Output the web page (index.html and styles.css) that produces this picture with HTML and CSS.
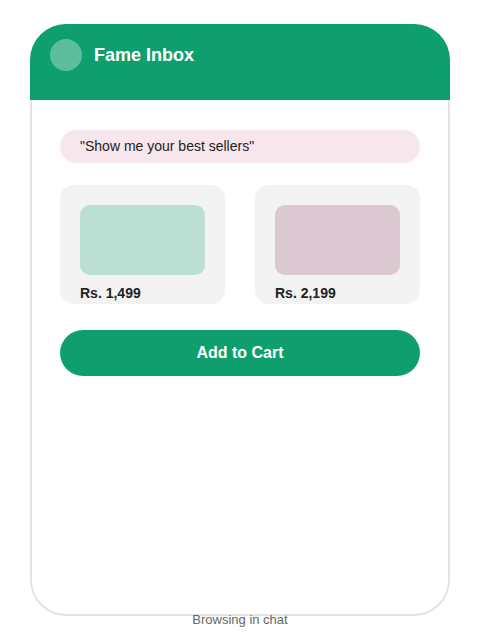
FILE: index.html
```html
<!DOCTYPE html>
<html lang="en">
<head>
    <meta charset="UTF-8">
    <meta name="viewport" content="width=device-width, initial-scale=1.0">
    <title>Fame Inbox</title>
    <link rel="stylesheet" href="styles.css">
</head>
<body>
    <div class="phone">
        <div class="chat-header">
            <div class="avatar"></div>
            <h1>Fame Inbox</h1>
        </div>
        <div class="chat-body">
            <div class="bubble">"Show me your best sellers"</div>
            <div class="products">
                <div class="product">
                    <div class="thumb thumb-green"></div>
                    <div class="price">Rs. 1,499</div>
                </div>
                <div class="product">
                    <div class="thumb thumb-rose"></div>
                    <div class="price">Rs. 2,199</div>
                </div>
            </div>
            <button class="cart-button">Add to Cart</button>
        </div>
    </div>
    <p class="caption">Browsing in chat</p>
</body>
</html>
```

FILE: styles.css
```css
body {
    margin: 0;
    padding-top: 24px;
    font-family: 'Liberation Sans', Arial, sans-serif;
    background-color: #ffffff;
    color: #222222;
}
.phone {
    width: 420px;
    height: 592px;
    margin: 0 auto;
    border-radius: 36px;
    box-shadow: inset 0 0 0 2px #e3e3e3;
    overflow: hidden;
    box-sizing: border-box;
}
.chat-header {
    background-color: #0f9f6e;
    display: flex;
    align-items: center;
    gap: 12px;
    padding: 15px 20px 29px;
}
.avatar {
    width: 32px;
    height: 32px;
    border-radius: 50%;
    background-color: rgba(255, 255, 255, 0.32);
}
.chat-header h1 {
    margin: 0;
    color: #ffffff;
    font-size: 18px;
    font-weight: bold;
}
.chat-body {
    padding: 30px 30px 0;
}
.bubble {
    background-color: #f7e6eb;
    border-radius: 17px;
    height: 33px;
    line-height: 33px;
    padding: 0 20px;
    font-size: 14px;
    color: #222222;
}
.products {
    display: grid;
    grid-template-columns: 1fr 1fr;
    gap: 30px;
    margin-top: 22px;
}
.product {
    background-color: #f3f3f3;
    border-radius: 14px;
    padding: 20px 20px 1px;
}
.thumb {
    height: 70px;
    border-radius: 10px;
    margin-bottom: 8px;
}
.thumb-green {
    background-color: #bbdfd3;
}
.thumb-rose {
    background-color: #dbc8d0;
}
.price {
    font-size: 14px;
    font-weight: bold;
    line-height: 20px;
}
.cart-button {
    display: block;
    width: 100%;
    height: 46px;
    margin-top: 26px;
    border: none;
    border-radius: 23px;
    background-color: #0f9f6e;
    color: #ffffff;
    font-family: inherit;
    font-size: 16px;
    font-weight: bold;
}
.caption {
    margin: -4px 0 0;
    text-align: center;
    font-size: 13px;
    color: #666666;
}
```
